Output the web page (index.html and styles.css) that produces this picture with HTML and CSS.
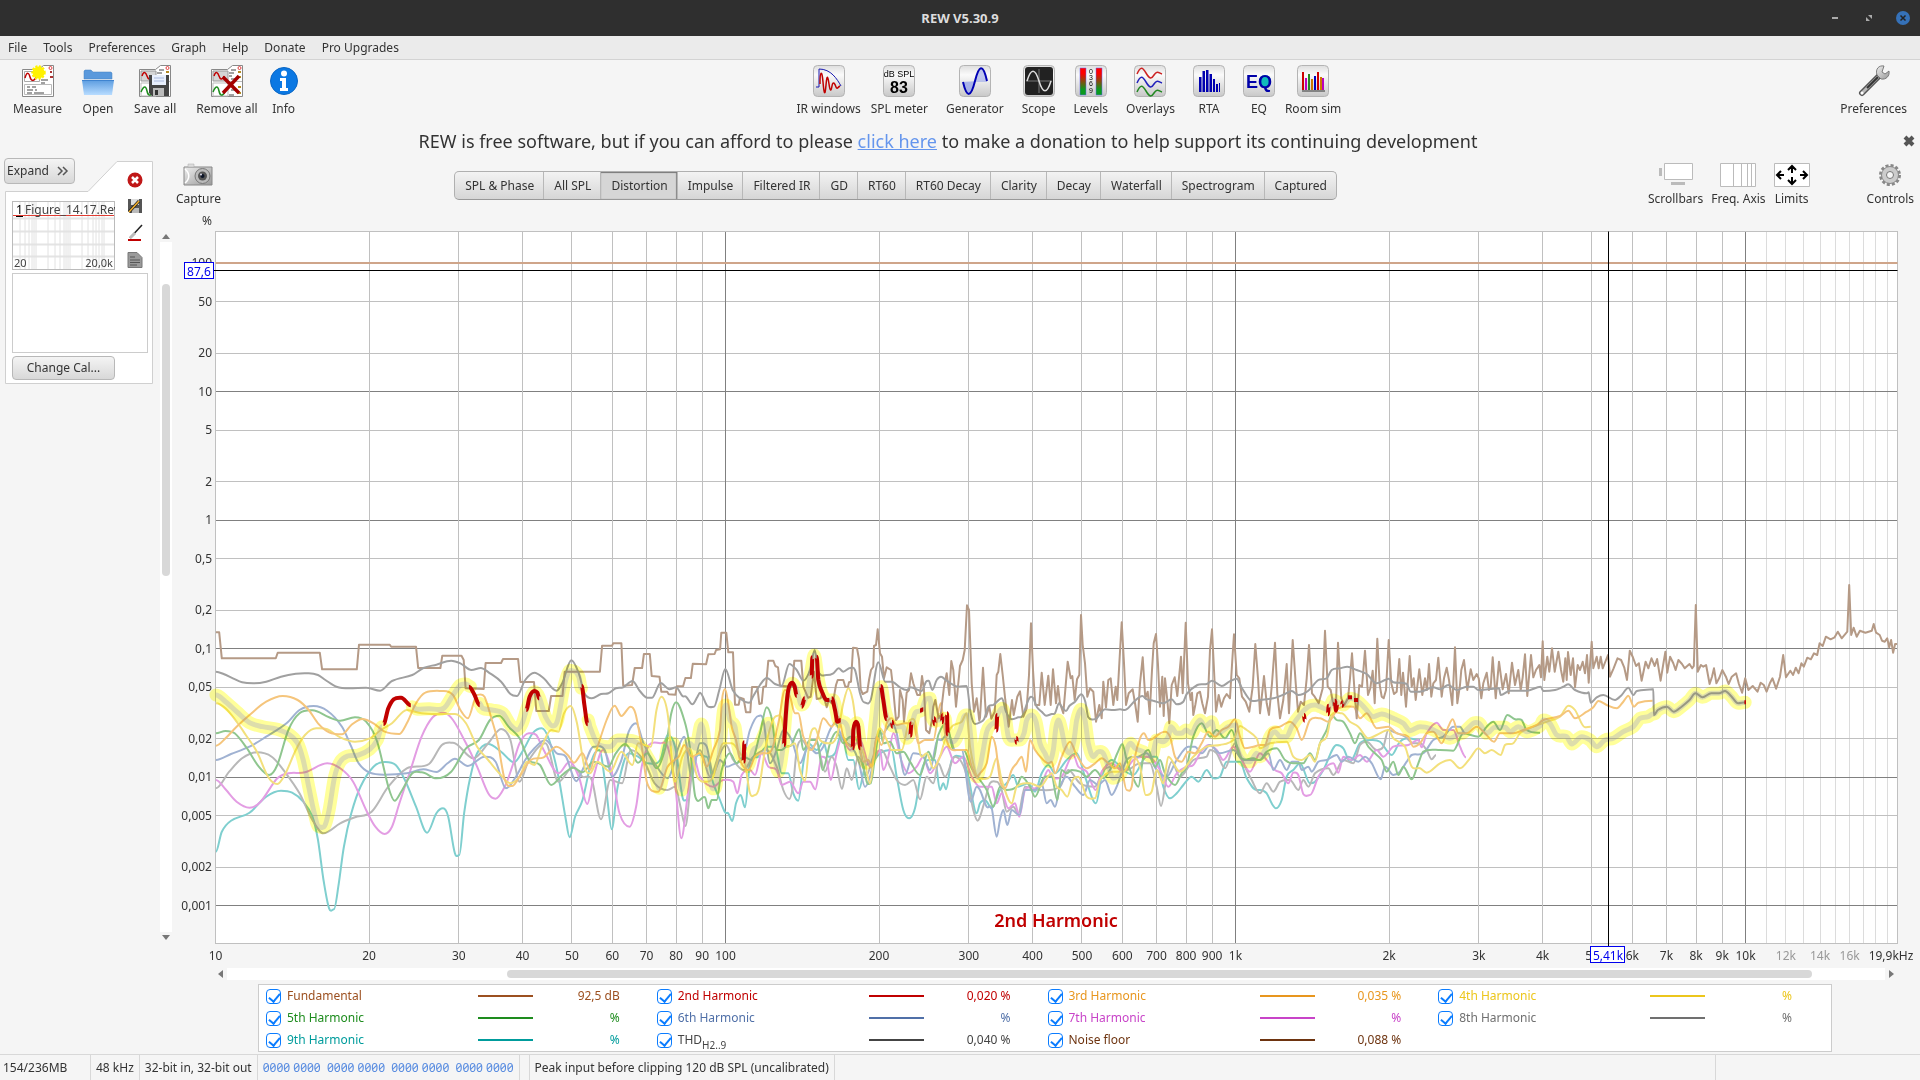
FILE: index.html
```html
<!DOCTYPE html>
<html lang="en">
<head>
  <meta charset="UTF-8">
  <title>REW V5.30.9</title>
  <link rel="stylesheet" href="styles.css">
</head>
<body>

<header class="titlebar">
  <h1>REW V5.30.9</h1>
  <div class="window-buttons">
    <button aria-label="Minimize"><svg width="14" height="14"><path d="M4 7h6" stroke="#aaa" stroke-width="2"/></svg></button>
    <button aria-label="Restore"><svg width="14" height="14"><path d="M6 4h4v4zM4 6v4h4z" fill="#aaa"/></svg></button>
    <button aria-label="Close"><svg width="14" height="14"><circle cx="7" cy="7" r="7" fill="#3571b8"/><path d="M4.500 4.500l5 5m0-5l-5 5" stroke="#222" stroke-width="1.500"/></svg></button>
  </div>
</header>

<nav class="menubar">
  <button>File</button>
  <button>Tools</button>
  <button>Preferences</button>
  <button>Graph</button>
  <button>Help</button>
  <button>Donate</button>
  <button>Pro Upgrades</button>
</nav>

<!-- shared icon parts -->
<svg class="defs" aria-hidden="true">
  <defs>
    <linearGradient id="tile" x1="0" y1="0" x2="0" y2="1"><stop offset="0" stop-color="#dedede"/><stop offset=".3" stop-color="#fafafa"/><stop offset="1" stop-color="#c8c8c8"/></linearGradient>
    <linearGradient id="folder" x1="0" y1="0" x2="0" y2="1"><stop offset="0" stop-color="#5b9ce0"/><stop offset="1" stop-color="#b8dcff"/></linearGradient>
    <linearGradient id="level" x1="0" y1="0" x2="0" y2="1"><stop offset=".2" stop-color="#f00"/><stop offset=".8" stop-color="#0a9a1e"/></linearGradient>
    <linearGradient id="metal" x1="0" y1="0" x2="1" y2="1"><stop offset="0" stop-color="#eee"/><stop offset="1" stop-color="#999"/></linearGradient>
    <symbol id="pages" viewBox="0 0 32 32">
      <path d="M.5 4.500h16l5-4h10v31H.5z" fill="#fff" stroke="#888"/>
      <path d="M2 6h15v10H2z" fill="#d5d5d5" stroke="#999"/>
      <path d="M3 11c2-6 4-3 5 0s3 5 5 0" fill="none" stroke="#c00000" stroke-width="1.500"/>
      <path d="M2 18h15v13H2z" fill="#fff" stroke="#bbb"/>
      <path d="M2 27c3-7 5-6 6-1s4 6 6 0" fill="none" stroke="#1e8c1e" stroke-width="1.500"/>
      <path d="M18 16.500h13" stroke="#bbb"/>
      <path d="M20 5h5M18 8h5M18 11h3M20 14h5M19 21h4M20 25h4M18 30h5" stroke="#444"/>
      <path d="M27 7h3M27 12h3M27 22h3M27 28h3" stroke="#b58b22" stroke-width="2"/>
      <circle cx="28.500" cy="3" r="1.500" fill="none" stroke="#e04040"/>
    </symbol>
  </defs>
</svg>

<div class="toolbar">
  <div class="tool-group files">
    <button class="tool">
      <svg width="32" height="32">
        <path d="M.5 4.500h16l5-4h10v31H.5z" fill="#fff" stroke="#888"/>
        <path d="M2.500 6.500h15v10h-15z" fill="#fff" stroke="#aaa"/>
        <path d="M3 13c2-7 4-5 5-1s4 5 6 0" fill="none" stroke="#c00000" stroke-width="1.500"/>
        <path d="M2.500 19.500h27v10h-27z" fill="#fff" stroke="#bbb"/>
        <path d="M5 22h3m2 0h4M5 25h6m2 0h2M5 28h5m2 0h10M19 15h7M19 18h4" stroke="#444"/>
        <path d="M28 7h2M28 12h3" stroke="#a33" stroke-width="2"/>
        <circle cx="28.500" cy="3" r="1.500" fill="none" stroke="#e04040"/>
        <circle cx="16.500" cy="7.500" r="6" fill="#fff200" stroke="#fff200" stroke-width="2.500" stroke-dasharray="2 1.500"/>
      </svg>
      <span>Measure</span>
    </button>
    <button class="tool">
      <svg width="32" height="32">
        <path d="M2 14V6l1-1h6l2 2h18l1 1v6z" fill="#5a99dc" stroke="#4580c0" stroke-width=".5"/>
        <path d="M0 15h32l-2 15H2z" fill="url(#folder)"/>
        <path d="M0 15.500h32" stroke="#3f84d0"/>
      </svg>
      <span>Open</span>
    </button>
    <button class="tool">
      <svg width="32" height="32">
        <use href="#pages" width="32" height="32"/>
        <path d="M10 10h20v21H13l-3-3z" fill="#444"/>
        <path d="M13 10h14v10H13z" fill="#e8effc"/>
        <path d="M15 13h10M15 16h10" stroke="#a9b8dc"/>
        <path d="M14 23h11v8H14z" fill="#bbb"/><path d="M16 25h3v5h-3z" fill="#333"/>
      </svg>
      <span>Save all</span>
    </button>
    <button class="tool tight-right">
      <svg width="32" height="32">
        <use href="#pages" width="32" height="32"/>
        <path d="M12 12l16 16M28 11L12 28" stroke="#a40000" stroke-width="3.500"/>
      </svg>
      <span>Remove all</span>
    </button>
    <button class="tool">
      <svg width="28" height="32">
        <circle cx="14" cy="16" r="13.500" fill="#0b78e3" stroke="#0a66c4"/>
        <circle cx="14" cy="8.500" r="3" fill="#fff"/>
        <path d="M10 13h6v10h2v3h-8v-3h2v-7h-2z" fill="#fff"/>
      </svg>
      <span>Info</span>
    </button>
  </div>

  <div class="tool-group">
    <button class="tool tight-right">
      <svg width="32" height="32"><rect class="tile" x=".5" y=".5" width="31" height="31" rx="4"/>
        <path d="M3 22h3V4c12 0 18 10 22 17" fill="none" stroke="#1818b0"/>
        <path d="M7 19c0-14 2-14 3-2s2 15 3 3 2-8 3-1 2 8 3 2 3-2 4 1 2 0 4-1" fill="none" stroke="#c00000" stroke-width="1.500"/></svg>
      <span>IR windows</span>
    </button>
    <button class="tool">
      <svg width="32" height="32"><rect class="tile" x=".5" y=".5" width="31" height="31" rx="4"/>
        <text x="16" y="12" class="ic-small">dB SPL</text><text x="16" y="28" class="ic-number">83</text></svg>
      <span>SPL meter</span>
    </button>
    <button class="tool">
      <svg width="32" height="32"><rect class="tile" x=".5" y=".5" width="31" height="31" rx="4"/>
        <path d="M3 17h25v-1C25-1 20-1 16 16z" fill="#9aa6e8" opacity=".6"/>
        <path d="M4 17h12c-4 16-8 16-12 0z" fill="#9aa6e8" opacity=".8"/>
        <path d="M4 17c4 17 8 15 12-1s8-18 12 0" fill="none" stroke="#0000b4" stroke-width="2"/></svg>
      <span>Generator</span>
    </button>
    <button class="tool">
      <svg width="32" height="32"><rect class="tile" x=".5" y=".5" width="31" height="31" rx="4"/>
        <rect x="2" y="2" width="28" height="28" rx="3" fill="#222"/>
        <path d="M16 4v24M3 16h26" stroke="#777"/>
        <path d="M4 16c4-13 8-13 12 0s8 13 12 0" fill="none" stroke="#ddd" stroke-width="1.500"/></svg>
      <span>Scope</span>
    </button>
    <button class="tool">
      <svg width="32" height="32"><rect class="tile" x=".5" y=".5" width="31" height="31" rx="4"/>
        <path d="M5 3h6v27H5zM21 3h6v27h-6z" fill="url(#level)" stroke="#66f" stroke-width=".5"/>
        <g class="ic-scale"><text x="16" y="9">0</text><text x="16" y="15">3</text><text x="16" y="21">6</text><text x="16" y="28">9</text></g></svg>
      <span>Levels</span>
    </button>
    <button class="tool">
      <svg width="32" height="32"><rect class="tile" x=".5" y=".5" width="31" height="31" rx="4"/>
        <g fill="none" stroke-width="1.500"><path d="M3 9c4-9 6-6 9-1s5 7 8 2 5-2 8-1" stroke="#c22"/>
        <path d="M3 18c4-9 6-6 9-1s5 7 8 2 5-2 8-1" stroke="#22b"/><path d="M3 27c4-9 6-6 9-1s5 7 8 2 5-2 8-1" stroke="#282"/></g></svg>
      <span>Overlays</span>
    </button>
    <button class="tool">
      <svg width="32" height="32"><rect class="tile" x=".5" y=".5" width="31" height="31" rx="4"/>
        <path d="M6 12h2.500v15H6zM9.500 6H12v21H9.500zM13 5h2.500v22H13zM16.500 9H19v18h-2.500zM20 14h2v13h-2zM23 19h2v8h-2zM26 18h1v9h-1z" fill="#0000b0"/></svg>
      <span>RTA</span>
    </button>
    <button class="tool tight-right">
      <svg width="32" height="32"><rect class="tile" x=".5" y=".5" width="31" height="31" rx="4"/>
        <circle cx="22" cy="16" r="6" fill="#1bb"/>
        <text x="16" y="23" class="ic-eq">EQ</text></svg>
      <span>EQ</span>
    </button>
    <button class="tool">
      <svg width="32" height="32"><rect class="tile" x=".5" y=".5" width="31" height="31" rx="4"/>
        <g stroke-width="2"><path d="M6 7v18M21 7v18" stroke="#c00"/><path d="M9 13v12M26 13v12" stroke="#b0b"/><path d="M12 9v16" stroke="#282"/><path d="M18 11v14" stroke="#00b"/><path d="M15 14v11M24 12v13" stroke="#c70"/></g>
        <path d="M5 26h23" stroke="#333"/></svg>
      <span>Room sim</span>
    </button>
  </div>

  <div class="tool-group">
    <button class="tool">
      <svg width="32" height="32">
        <path d="M4 28L22 10" stroke="#555" stroke-width="6" stroke-linecap="round"/>
        <path d="M4 28L21 11" stroke="#bbb" stroke-width="3" stroke-linecap="round"/>
        <path d="M9 23L20 12" stroke="#333" stroke-width="2"/>
        <path d="M26 1c-5-1-9 3-7 9l4 4c5 1 9-3 8-8l-4 3-3-2z" fill="url(#metal)" stroke="#666" stroke-width=".8"/>
        <circle cx="4" cy="28" r="1.500" fill="#fff"/>
      </svg>
      <span>Preferences</span>
    </button>
  </div>
</div>

<div class="donate">
  <p>REW is free software, but if you can afford to please <a href="#">click here</a> to make a donation to help support its continuing development</p>
  <button aria-label="Dismiss"><svg width="12" height="12"><path d="M2 2l8 8M10 2l-8 8" stroke="#555" stroke-width="4"/></svg></button>
</div>

<main>
  <aside>
    <button class="btn expand">Expand
      <svg width="12" height="10"><path d="M1 1l4 4-4 4M6 1l4 4-4 4" fill="none" stroke="#555" stroke-width="1.500"/></svg>
    </button>
    <div class="measurement">
      <svg class="card-shape" width="149" height="224"><path d="M.5 30.500H83L112 .5h35.500v222H.5z" fill="#fff" stroke="#d0d0d0"/></svg>
      <div class="preview-col">
        <svg class="preview" width="103" height="69">
          <rect x=".5" y=".5" width="102" height="68" fill="#fff" stroke="#bbb"/>
          <path d="M1 17.500h101M1 30.500h101M1 43.500h101M1 55.500h101" stroke="#e4e4e4" stroke-width="2"/>
          <path d="M8 1v67M13 1v67M17 1v67M20 1v67M22 1v67M24 1v67M36 1v67M43 1v67M48 1v67M52 1v67M54 1v67M56 1v67M58 1v67M70 1v67M76 1v67M81 1v67M84 1v67M87 1v67M90 1v67M92 1v67" stroke="#e2e2e2"/>
          <path d="M1 14.500h101" stroke="#e03c32"/>
          <path d="M4 15.500h7" stroke="#000"/>
          <text x="4" y="13" class="num">1</text>
          <text x="13" y="13">Figure_14.17.Rev</text>
          <text x="2" y="66" class="lim">20</text><text x="101" y="66" class="lim end">20,0k</text>
        </svg>
        <textarea aria-label="Measurement notes"></textarea>
        <button class="btn">Change Cal...</button>
      </div>
      <div class="side-icons">
        <button aria-label="Remove"><svg width="16" height="16"><circle cx="8" cy="8" r="7.500" fill="#c01818"/><path d="M5 5l6 6M11 5l-6 6" stroke="#fff" stroke-width="2.500"/></svg></button>
        <button aria-label="Save"><svg width="16" height="16"><path d="M1 1h14v14H3l-2-2z" fill="#555"/><path d="M4 1h8v6H4z" fill="#ddd"/><path d="M5 10h7v5H5z" fill="#bbb"/><path d="M2 14L12 3" stroke="#222" stroke-width="3"/><path d="M2 14L12 3" stroke="#f5b02a" stroke-width="1.500"/></svg></button>
        <button aria-label="Trace colour"><svg width="16" height="18"><path d="M3 14L15 1" stroke="#222" stroke-width="1.500"/><path d="M3 14l5-5" stroke="#bbb" stroke-width="3"/><path d="M1 16h13" stroke="#c00000" stroke-width="2"/></svg></button>
        <button aria-label="Notes"><svg width="16" height="16"><path d="M1 .5h9l5 5v10H1z" fill="#9a9a9a" stroke="#777"/><path d="M3 5h5M3 8h10M3 10.500h10M3 13h7" stroke="#555"/></svg></button>
      </div>
    </div>
  </aside>

  <div class="vscroll">
    <svg width="8" height="6"><path d="M0 6l4-5 4 5z" fill="#777"/></svg>
    <div class="track"><div class="thumb"></div></div>
    <svg width="8" height="6"><path d="M0 0l4 5 4-5z" fill="#777"/></svg>
  </div>

  <div class="graph">
    <div class="graph-tools">
      <button class="tool">
        <svg width="30" height="24">
          <path d="M1 4h28v18H1z" fill="url(#metal)" stroke="#888"/><path d="M5 1h6v3H5z" fill="#ddd" stroke="#aaa" stroke-width=".5"/>
          <path d="M2 6c5 4 5 10 0 14" fill="none" stroke="#fff" stroke-width="1.500"/>
          <circle cx="19.500" cy="13" r="7.500" fill="#bbb" stroke="#777"/><circle cx="19.500" cy="13" r="4.500" fill="#555"/><circle cx="19.500" cy="13" r="2" fill="#0c1426"/><circle cx="18" cy="11.500" r="1" fill="#dde"/>
        </svg>
        <span>Capture</span>
      </button>
      <div class="tabs">
        <button>SPL &amp; Phase</button>
        <button>All SPL</button>
        <button class="active">Distortion</button>
        <button>Impulse</button>
        <button>Filtered IR</button>
        <button>GD</button>
        <button>RT60</button>
        <button>RT60 Decay</button>
        <button>Clarity</button>
        <button>Decay</button>
        <button>Waterfall</button>
        <button>Spectrogram</button>
        <button>Captured</button>
      </div>
      <div class="view-tools">
        <button class="tool">
          <svg width="46" height="24"><path d="M11.500.5h28v16h-28z" fill="#fff" stroke="#bbb"/><path d="M6 5h3v8H6zM18 19h14v3H18z" fill="#bbb"/></svg>
          <span>Scrollbars</span>
        </button>
        <button class="tool">
          <svg width="36" height="24"><path d="M.5.5h35v23H.5zM13.500 0v24M21.500 0v24M27.500 0v24M31.500 0v24" fill="#fff" stroke="#bbb"/></svg>
          <span>Freq. Axis</span>
        </button>
        <button class="tool">
          <svg width="36" height="24"><path d="M.5.5h35v23H.5z" fill="#fff" stroke="#bbb"/><path d="M18 10V3m-4 4l4-4 4 4M18 14v7m-4-4l4 4 4-4M10 12H3m4-4l-4 4 4 4M26 12h7m-4-4l4 4-4 4" fill="none" stroke="#000" stroke-width="2"/></svg>
          <span>Limits</span>
        </button>
        <button class="tool controls">
          <svg width="24" height="24"><circle cx="12" cy="12" r="9.500" fill="none" stroke="#888" stroke-width="3" stroke-dasharray="3 2"/><circle cx="12" cy="12" r="8.500" fill="#ccc" stroke="#888"/><circle cx="12" cy="12" r="3.500" fill="#f5f5f5" stroke="#777"/></svg>
          <span>Controls</span>
        </button>
      </div>
    </div>

    <svg id="plot" viewBox="172 212 1748 754" role="img" aria-label="Distortion"></svg>

    <div class="hscroll">
      <svg width="6" height="8"><path d="M6 0L1 4l5 4z" fill="#777"/></svg>
      <div class="track"><div class="thumb"></div></div>
      <svg width="6" height="8"><path d="M0 0l5 4-5 4z" fill="#777"/></svg>
    </div>

    <div class="legend">
      <div class="entry fund"><label><input type="checkbox" checked>Fundamental</label><i></i><span>92,5 dB</span></div>
      <div class="entry h2"><label><input type="checkbox" checked>2nd Harmonic</label><i></i><span>0,020 %</span></div>
      <div class="entry h3"><label><input type="checkbox" checked>3rd Harmonic</label><i></i><span>0,035 %</span></div>
      <div class="entry h4"><label><input type="checkbox" checked>4th Harmonic</label><i></i><span>%</span></div>
      <div class="entry h5"><label><input type="checkbox" checked>5th Harmonic</label><i></i><span>%</span></div>
      <div class="entry h6"><label><input type="checkbox" checked>6th Harmonic</label><i></i><span>%</span></div>
      <div class="entry h7"><label><input type="checkbox" checked>7th Harmonic</label><i></i><span>%</span></div>
      <div class="entry h8"><label><input type="checkbox" checked>8th Harmonic</label><i></i><span>%</span></div>
      <div class="entry h9"><label><input type="checkbox" checked>9th Harmonic</label><i></i><span>%</span></div>
      <div class="entry thd"><label><input type="checkbox" checked><span>THD<sub>H2..9</sub></span></label><i></i><span>0,040 %</span></div>
      <div class="entry noise"><label><input type="checkbox" checked>Noise floor</label><i></i><span>0,088 %</span></div>
    </div>
  </div>
</main>

<footer class="statusbar">
  <span class="mem">154/236MB</span>
  <span>48 kHz</span>
  <span>32-bit in, 32-bit out</span>
  <span class="bits">0000 0000&nbsp; 0000 0000&nbsp; 0000 0000&nbsp; 0000 0000</span>
  <span class="blank"></span>
  <span>Peak input before clipping 120 dB SPL (uncalibrated)</span>
  <span class="rest"></span>
  <span class="last"></span>
</footer>

<script src="script.js"></script>
</body>
</html>
```

FILE: styles.css
```css
* {
  box-sizing: border-box;
}
body {
  margin: 0;
  min-height: 100vh;
  display: flex;
  flex-direction: column;
  background: #f5f5f5;
  color: #333;
  font: 12px/16px "Noto Sans", sans-serif;
}
button {
  font: inherit;
  color: inherit;
  background: none;
  border: 0;
  padding: 0;
}
svg {
  display: block;
}
.defs {
  position: absolute;
  width: 0;
  height: 0;
}

/* title bar and menu */
.titlebar {
  position: relative;
  height: 36px;
  background: #2f2f2f;
  color: #ddd;
}
.titlebar h1 {
  margin: 0;
  font-size: 13px;
  line-height: 36px;
  text-align: center;
}
.window-buttons {
  position: absolute;
  right: 10px;
  top: 11px;
  display: flex;
  gap: 20px;
}
.menubar {
  display: flex;
  gap: 16px;
  height: 24px;
  padding: 0 8px;
  background: #ebebeb;
  border-bottom: 1px solid #d3d3d3;
}

/* main toolbar */
.toolbar {
  display: flex;
  justify-content: space-between;
  padding: 5px 13px 6px;
}
.tool-group {
  display: flex;
  gap: 18px;
}
.files {
  gap: 20px;
}
.tool {
  display: flex;
  flex-direction: column;
  align-items: center;
  gap: 4px;
  white-space: nowrap;
}
.tight-right {
  margin-right: -8px;
}
.tile {
  fill: url(#tile);
  stroke: #b4b4b4;
}
.ic-small {
  font: 9px "Liberation Sans", sans-serif;
  text-anchor: middle;
}
.ic-number {
  font: bold 16px "Liberation Sans", sans-serif;
  text-anchor: middle;
}
.ic-eq {
  font: bold 18px "Liberation Sans", sans-serif;
  text-anchor: middle;
  fill: #0000a8;
}
.ic-scale {
  font: 7px "Liberation Sans", sans-serif;
  text-anchor: middle;
}

.donate {
  display: flex;
  align-items: center;
  height: 35px;
  padding-right: 5px;
}
.donate p {
  flex: 1;
  margin: 0;
  padding-right: 7px;
  text-align: center;
  font-size: 18px;
  line-height: 24px;
}
.donate a {
  color: #6495ed;
}

main {
  flex: 1;
  display: flex;
}

/* measurement list */
aside {
  width: 160px;
  padding-left: 4px;
}
.btn {
  height: 24px;
  border: 1px solid #b8b8b8;
  border-radius: 4px;
  background: linear-gradient(#f4f4f4, #d8d8d8);
}
.expand {
  display: flex;
  align-items: center;
  justify-content: space-between;
  width: 71px;
  height: 26px;
  padding: 0 5px 0 2px;
}
.measurement {
  position: relative;
  display: flex;
  justify-content: space-between;
  width: 149px;
  height: 224px;
  margin: -23px 0 0 1px;
  padding: 0 5px 0 7px;
}
.card-shape {
  position: absolute;
  left: 0;
  top: 0;
  z-index: -1;
}
.preview-col {
  width: 103px;
  padding-top: 40px;
}
.preview {
  overflow: hidden;
}
.preview text {
  fill: #444;
}
.preview .num {
  fill: #000;
}
.preview .lim {
  font-size: 11px;
}
.preview .end {
  text-anchor: end;
}
.preview-col textarea {
  display: block;
  width: 136px;
  height: 80px;
  margin: 3px 0;
  border: 1px solid #ccc;
  background: #fff;
  resize: none;
}
.preview-col .btn {
  width: 103px;
}
.side-icons {
  display: flex;
  flex-direction: column;
  gap: 10px;
  height: 112px;
  padding-top: 11px;
  margin-right: 6px;
}

/* scrollbars */
.vscroll {
  display: flex;
  flex-direction: column;
  align-items: center;
  gap: 3px;
  width: 12px;
  padding: 75px 0 113px;
}
.track {
  background: #fff;
}
.thumb {
  border-radius: 4px;
  background: #d8d8d8;
}
.vscroll .track {
  flex: 1;
  width: 12px;
  padding: 42px 2px 0;
}
.vscroll .thumb {
  height: 45%;
}
.hscroll {
  display: flex;
  align-items: center;
  gap: 4px;
  margin: 2px 25px 0 45px;
}
.hscroll .track {
  flex: 1;
  height: 12px;
  padding: 2px 73px 2px 280px;
}
.hscroll .thumb {
  height: 8px;
}

/* graph */
.graph {
  flex: 1;
  min-width: 0;
}
.graph-tools {
  display: grid;
  grid-template-columns: auto 3fr auto 4fr auto;
  align-items: start;
  height: 54px;
  padding: 5px 6px 0 4px;
}
.tabs {
  grid-column: 3;
  display: flex;
  height: 29px;
  margin-top: 8px;
  border: 1px solid #b0b0b0;
  border-bottom-color: #999;
  border-radius: 5px;
  overflow: hidden;
  background: linear-gradient(#f3f3f3, #d6d6d6);
}
.tabs button {
  padding: 0 9px 0 10px;
  white-space: nowrap;
}
.tabs button + button {
  border-left: 1px solid #b8b8b8;
}
.tabs .active {
  background: #d6d6d6;
  box-shadow: inset 0 1px 1px #777, inset -1px 0 1px #888;
}
.view-tools {
  grid-column: 5;
  display: flex;
  gap: 8px;
}
.view-tools .controls {
  margin-left: 49px;
}
#plot {
  width: 100%;
}
#plot text {
  fill: #333;
}
#plot .y text,
#plot .unit {
  text-anchor: end;
}
#plot .x text {
  text-anchor: middle;
}
#plot .x .faint {
  fill: #999;
}
#plot .cursor text {
  fill: #0000ee;
  text-anchor: middle;
}
#plot .cursor rect {
  fill: #fff;
  stroke: #0000ee;
}
#plot .caption {
  font-size: 18px;
  font-weight: 600;
  fill: #c00000;
  text-anchor: middle;
  stroke: #fff;
  stroke-width: 2px;
  paint-order: stroke;
}
.trace {
  fill: none;
  stroke-width: 2;
  stroke-linejoin: round;
}
.halo {
  fill: none;
  stroke: #ffff9a;
  stroke-width: 13;
  stroke-linecap: round;
  stroke-linejoin: round;
  mix-blend-mode: multiply;
}
.core {
  fill: none;
  stroke: #8585d8;
  stroke-opacity: .28;
  stroke-width: 5;
  stroke-linejoin: round;
}
.peak {
  fill: none;
  stroke: #c00000;
  stroke-width: 4;
}

/* legend */
.legend {
  display: grid;
  grid-template-columns: repeat(4, 1fr);
  column-gap: 37px;
  margin: 4px 88px 2px 86px;
  padding: 0 39px 0 7px;
  border: 1px solid #ccc;
  background: #fff;
}
.entry {
  display: grid;
  grid-template-columns: 212px 55px 1fr;
  align-items: center;
  height: 22px;
}
.entry label {
  display: flex;
  align-items: center;
  gap: 6px;
}
.entry input {
  appearance: none;
  width: 15px;
  height: 15px;
  margin: 0;
  border: 1px solid #0a7cff;
  border-radius: 4px;
  background: #fff;
  position: relative;
}
.entry input:checked::after {
  content: "";
  position: absolute;
  left: 4px;
  top: 1px;
  width: 5px;
  height: 9px;
  border: solid #0a7cff;
  border-width: 0 2px 2px 0;
  transform: rotate(40deg);
}
.entry i {
  height: 2px;
  background: currentColor;
}
.entry > span {
  text-align: right;
}
.entry sub {
  font-size: 10px;
  line-height: 0;
  vertical-align: -5px;
}
.fund { color: #9c5020; }
.h2 { color: #c00000; }
.h3 { color: #e8961e; }
.h4 { color: #ecc61c; }
.h5 { color: #1e8c1e; }
.h6 { color: #5070a8; }
.h7 { color: #c844c8; }
.h8 { color: #707070; }
.h9 { color: #009c9c; }
.thd { color: #444; }
.noise { color: #6e3410; }

/* status bar */
.statusbar {
  display: flex;
  height: 26px;
  border-top: 1px solid #d8d8d8;
  line-height: 25px;
}
.statusbar span {
  padding: 0 5px;
  border-right: 1px solid #d8d8d8;
  white-space: nowrap;
}
.statusbar .mem {
  width: 91px;
  padding-left: 3px;
}
.statusbar .bits {
  color: #5a8de0;
  font-feature-settings: "zero";
}
.statusbar .blank {
  width: 10px;
  padding: 0;
}
.statusbar .rest {
  flex: 1;
}
.statusbar .last {
  width: 204px;
  border: 0;
}
```

FILE: script.js
```js
const NS = 'http://www.w3.org/2000/svg';
const plot = document.getElementById('plot');
const LEFT = 215.5, RIGHT = 1897.5, TOP = 231.5, BOTTOM = 943.5;

const fx = f => LEFT + 510 * Math.log10(f / 10);
const vy = v => 520.3 - 128.5 * Math.log10(v);
const snap = n => Math.floor(n) + 0.5;

function add(tag, attrs, parent, text) {
  const el = document.createElementNS(NS, tag);
  for (const k in attrs) el.setAttribute(k, attrs[k]);
  if (text) el.textContent = text;
  (parent || plot).appendChild(el);
  return el;
}

function line(x1, y1, x2, y2, stroke) {
  add('path', { d: `M${x1} ${y1}L${x2} ${y2}`, stroke });
}

// Grid
add('rect', { x: LEFT, y: TOP, width: RIGHT - LEFT, height: BOTTOM - TOP, fill: '#fff' });
for (let k = 11; k < 20; k++) line(snap(fx(k * 1000)), TOP, snap(fx(k * 1000)), BOTTOM, '#dcdcdc');
const yTicks = [50, 20, 5, 2, 0.5, 0.2, 0.05, 0.02, 0.005, 0.002, 100, 10, 1, 0.1, 0.01, 0.001];
for (const v of yTicks) {
  const y = snap(vy(v));
  line(LEFT, y, RIGHT, y, Number.isInteger(Math.round(Math.log10(v) * 1000) / 1000) ? '#808080' : '#c0c0c0');
}
for (const dec of [10, 100, 1000]) {
  for (let m = 2; m <= 10; m++) line(snap(fx(dec * m)), TOP, snap(fx(dec * m)), BOTTOM, m === 10 ? '#808080' : '#c0c0c0');
}
add('rect', { x: LEFT, y: TOP, width: RIGHT - LEFT, height: BOTTOM - TOP, fill: 'none', stroke: '#c0c0c0' });
add('path', { d: `M${LEFT} 263H${RIGHT}`, stroke: '#cfa58a', 'stroke-width': 2 });

// Axis labels
add('text', { x: 212, y: 225, class: 'unit' }, plot, '%');
const yAxis = add('g', { class: 'y' });
for (const v of yTicks) add('text', { x: 212, y: Math.round(vy(v)) + 4 }, yAxis, String(v).replace('.', ','));
const xAxis = add('g', { class: 'x' });
const hz = f => (f >= 1000 ? f / 1000 + 'k' : String(f));
for (const dec of [10, 100, 1000]) {
  for (let m = 1; m <= 9; m++) add('text', { x: fx(dec * m), y: 960 }, xAxis, hz(dec * m));
}
add('text', { x: fx(10000), y: 960 }, xAxis, '10k');
for (const k of [12, 14, 16]) add('text', { x: fx(k * 1000), y: 960, class: 'faint' }, xAxis, k + 'k');
add('text', { x: 1891, y: 960 }, xAxis, '19,9kHz');

// Samples are stored per band: x origin, y origin, x steps per pixel. y is always 3 steps per pixel.
const bands = {
  a: [170, 580, 2.703],
  b: [700, 590, 3],
  c: [980, 590, 3],
  d: [1260, 590, 3],
  e: [1300, 560, 2.529]
};

const traces = [
  { name: 'h9', color: '#7fcfcf', data: {
    a: '124,815 140,755 165,722 215,698 260,650 300,632 330,638 360,665 385,710 400,780 415,900 430,985 443,988 455,920 470,800 490,700 515,620 550,560 580,546 610,555 635,600 665,680 695,758 720,700 738,685 752,710 770,820 782,825 795,700 810,600 830,520 860,492 895,515 930,547 955,510 980,460 1005,445 1025,480 1050,590 1070,720 1080,772 1095,710 1115,660 1140,540 1160,510 1180,640 1194,748 1210,620 1240,520 1265,530 1290,550 1325,540 1345,465 1365,500 1385,650 1395,660 1415,540',
    b: '20,500 40,580 60,630 75,667 85,670 97,693 108,640 122,615 135,652 150,520 175,500 200,470 225,470 245,550 265,550 280,610 295,632 310,520 325,460 350,480 370,455 385,500 405,490 425,430 445,510 460,510 477,598 495,530 515,520 540,490 575,480 590,560 610,660 627,685 645,655 665,540 685,510 705,510 720,600 730,580 738,598 755,510 785,500 805,560 830,670',
    c: '0,640 15,630 35,655 60,600 80,580 100,555 115,590 145,580 165,605 185,550 205,525 225,550 260,510 290,490 315,560 348,640 365,560 395,510 430,540 460,555 500,500 530,500 550,590 570,625 590,610 610,585 635,560 655,575 680,540 700,565 720,560 740,515 780,515 800,565 830,600',
    d: '0,600 20,610 35,640 48,655 65,630 80,560 100,540 120,520 150,580 165,575 190,540 230,465 250,475 270,515 300,460 330,450 360,455 395,495 420,455 445,445 480,450' } },
  { name: 'h8', color: '#b8b8b8', data: {
    a: '124,625 160,575 195,535 235,517 275,530 310,575 350,640 385,720 415,760 460,730 500,712 545,695 590,620 640,565 700,552 735,495 765,488 820,535 860,490 895,447 920,480 945,605 970,540 1015,490 1050,605 1090,560 1115,590 1140,600 1165,718 1190,600 1222,610 1245,510 1280,540 1310,610 1345,630 1365,620 1380,680 1393,738 1410,590',
    b: '0,480 30,560 55,500 78,465 100,510 130,540 160,500 200,480 230,530 250,600 268,627 280,580 290,480 305,450 330,480 350,460 375,545 395,500 410,530 426,597 440,535 455,570 475,500 500,555 520,500 545,480 570,530 590,570 615,585 640,570 660,628 680,560 700,580 715,520 735,560 765,500 795,540 820,660 833,692',
    c: '0,680 15,630 30,580 50,575 65,600 80,665 100,650 115,670 135,590 180,600 240,590 265,540 300,580 345,590 370,540 400,530 440,540 480,520 510,520 530,590 543,648 560,560 575,515 600,560 640,510 680,500 690,480 710,490 735,535 765,460 790,520 815,570',
    d: '0,610 20,580 40,605 60,575 90,570 115,600 130,570 145,590 165,550 205,535 220,555 250,510 280,520 300,465 320,455 350,480 370,470 385,420 400,425 435,440 460,460 480,460 500,480 515,508 528,495' } },
  { name: 'h7', color: '#e39de3', data: {
    a: '124,600 150,628 180,665 215,683 245,665 290,595 320,580 365,577 425,550 460,565 495,605 530,690 555,740 580,762 600,740 620,670 650,570 680,470 710,412 740,398 765,420 800,490 830,560 860,640 880,656 905,620 925,560 945,490 970,460 990,465 1010,510 1050,580 1080,545 1105,590 1128,672 1145,590 1170,510 1195,580 1215,700 1242,740 1260,680 1275,560 1295,495 1325,490 1345,500 1365,610 1382,775 1400,640 1415,530',
    b: '0,560 40,590 70,570 100,575 112,610 125,555 150,540 165,555 185,490 205,530 230,540 245,585 270,575 295,610 310,575 330,575 346,598 365,500 380,510 392,570 410,490 425,445 450,480 480,450 510,530 540,480 550,540 565,500 580,430 605,515 625,550 650,530 670,500 690,550 720,500 740,470 765,520 790,500 815,560',
    c: '0,590 35,590 50,640 65,610 85,655 105,640 118,680 135,600 165,595 185,580 205,540 220,565 245,560 280,495 295,530 320,545 347,600 365,545 395,520 430,545 460,510 490,500 515,505 540,540 565,590 590,550 620,530 640,525 660,490 685,465 710,480 730,510 760,470 780,500 810,545',
    d: '0,490 20,510 45,540 65,550 85,580 100,548 115,555 130,612 150,615 175,560 190,540 205,525 220,520 235,548 250,500 275,510 300,495 320,515 350,480 370,500 400,470 445,465 475,450 485,472 500,430 530,398 550,420 580,420 600,470 618,502' } },
  { name: 'h6', color: '#a0b2d2', data: {
    a: '124,540 165,522 215,500 260,470 315,430 350,390 388,378 425,392 465,440 490,500 510,550 540,578 580,584 640,580 685,568 720,576 750,550 770,536 805,558 850,530 880,545 908,625 935,590 960,540 985,505 1015,480 1045,520 1070,530 1098,604 1115,570 1145,500 1175,510 1195,590 1220,540 1240,455 1260,430 1280,490 1310,550 1345,595 1375,500 1390,470 1410,590',
    b: '0,460 20,470 40,550 60,510 80,530 95,525 130,500 150,420 175,378 190,390 210,520 230,480 250,420 275,450 300,520 325,470 350,490 370,470 390,420 405,400 430,450 455,470 475,510 495,590 515,540 530,440 550,430 575,400 590,430 615,555 640,490 670,500 690,540 710,455 725,450 745,430 765,480 785,480 812,635 830,590',
    c: '0,600 20,650 35,655 50,740 60,690 70,660 82,705 95,660 118,675 135,600 165,600 185,580 200,640 212,630 225,650 240,590 260,560 285,590 310,615 330,570 355,585 375,570 395,615 410,590 440,510 475,500 500,490 530,540 560,560 590,510 625,470 645,470 665,490 690,465 720,490 760,480 790,510 830,510',
    d: '0,510 25,490 40,540 60,510 80,540 95,515 115,515 125,540 145,530 155,545 175,515 200,510 230,495 245,515 265,500 295,515 315,500 335,520 362,568 375,530 400,555 420,545 440,515 455,495 490,490 520,450 550,440 580,410 600,410 615,430' } },
  { name: 'h5', color: '#8fc68f', data: {
    a: '124,460 150,453 175,460 205,500 240,560 268,585 290,555 320,450 350,400 385,391 430,412 460,422 500,412 530,425 560,485 590,620 607,662 625,635 655,580 680,577 720,595 760,575 800,505 835,480 865,420 890,407 915,440 945,475 970,540 1000,555 1030,615 1060,585 1090,563 1115,577 1145,545 1185,560 1205,520 1230,492 1245,510 1265,548 1290,520 1315,565 1340,500 1355,400 1368,367 1390,420 1405,500 1420,650',
    b: '15,622 25,655 35,630 50,630 65,540 90,490 110,520 130,500 155,510 180,430 200,352 215,385 230,480 245,480 258,470 275,465 285,440 298,418 310,480 330,450 350,450 368,540 390,460 410,425 430,460 450,440 475,460 500,575 512,580 525,500 540,420 550,460 570,455 590,490 610,485 630,515 660,555 685,485 700,510 715,435 740,400 760,480 790,480 815,535',
    c: '0,570 20,600 40,650 60,590 80,600 110,590 125,560 150,590 165,620 190,565 215,560 232,630 245,540 260,550 275,540 300,545 320,560 345,540 370,565 395,530 412,490 427,462 440,510 460,565 475,590 490,500 505,480 525,530 540,510 555,550 585,585 605,550 620,530 640,440 665,400 690,440 710,420 735,445 755,420 780,500 820,505',
    d: '0,510 20,485 50,475 75,510 100,520 130,520 150,490 165,510 180,460 200,420 215,375 230,390 250,395 270,430 285,460 300,430 325,470 345,490 365,510 380,545 400,515 415,555 430,530 455,568 475,520 490,485 540,480 580,482 610,430 655,440 680,410 700,395 720,420 742,375 765,388 785,390 800,420 840,428' } },
  { name: 'h4', color: '#f3e07c', data: {
    a: '124,370 150,385 180,425 205,465 235,515 265,590 290,612 310,585 340,510 365,465 395,445 425,448 460,472 500,485 540,475 570,450 600,430 640,390 680,400 720,402 770,402 800,430 830,500 860,540 890,580 920,610 945,590 965,545 985,555 1005,500 1030,450 1050,455 1065,400 1083,378 1100,430 1120,560 1135,580 1155,545 1190,575 1220,515 1250,555 1265,490 1300,500 1315,390 1328,350 1345,400 1365,605 1385,530 1405,505 1425,590',
    b: '20,575 40,560 70,460 95,460 120,490 135,520 150,610 165,615 178,590 195,480 215,400 230,378 245,385 262,470 285,460 300,540 315,572 330,440 345,415 360,450 385,460 410,440 430,340 445,295 458,330 475,450 490,490 510,580 525,470 540,415 560,450 575,480 605,480 630,390 645,395 665,500 680,490 700,535 720,500 735,450 755,410 785,395 800,370 810,470 830,560',
    c: '0,565 30,560 50,505 65,570 95,640 110,590 150,580 180,590 215,550 230,590 245,600 262,620 278,570 295,560 320,620 345,625 360,570 400,545 430,545 460,500 480,530 497,615 515,605 530,540 550,580 565,500 600,545 640,500 680,470 720,465 760,450 780,408 800,420 830,445',
    d: '0,475 30,460 80,455 100,500 125,510 150,495 165,515 180,460 200,440 215,375 245,370 270,395 295,410 325,445 350,435 385,420 400,445 435,470 455,530 480,535 500,548 540,520 570,510 600,535 630,505 655,475 675,490 695,480 722,495 735,465 760,460 780,430 820,410 860,395 900,380 925,347 945,360 975,412 992,410' } },
  { name: 'h3', color: '#f5c57c', data: {
    a: '124,497 150,475 180,440 215,405 260,365 305,348 345,360 375,390 400,430 430,457 465,463 490,435 520,417 550,430 580,455 620,462 640,430 665,370 690,338 740,333 765,345 785,390 805,415 830,345 850,350 870,420 885,480 905,600 925,618 950,580 975,540 1010,532 1045,500 1075,525 1092,548 1115,520 1135,570 1150,520 1180,420 1202,377 1220,408 1245,380 1258,400 1275,500 1290,610 1320,635 1345,560 1375,530 1390,495 1410,530',
    b: '0,490 20,530 40,480 60,420 66,330 75,297 85,340 95,410 108,450 120,510 145,540 165,500 185,490 215,480 235,400 255,300 270,320 285,370 295,370 310,440 335,480 350,450 370,385 395,410 415,380 430,440 455,470 470,440 490,515 505,510 515,530 530,440 545,465 560,400 575,385 590,405 615,400 640,400 655,460 675,450 700,450 722,340 735,430 750,475 770,480 800,480 815,530 830,560',
    c: '0,550 20,520 35,440 47,470 60,570 75,595 95,540 110,520 125,500 138,545 150,450 165,480 185,505 205,520 215,515 225,550 245,500 270,455 290,495 320,535 345,520 365,505 385,520 405,535 420,520 440,600 455,590 465,500 480,445 492,430 505,450 520,445 540,430 555,425 570,440 585,500 605,515 625,485 645,490 665,460 685,425 705,440 725,420 745,410 765,388 780,440 795,475 820,470',
    d: '0,465 15,465 30,420 60,410 90,395 110,415 125,450 150,390 180,385 205,395 235,355 280,350 300,385 320,370 350,415 385,410 410,430 445,440 460,470 480,460 500,430 520,425 545,460 565,410 578,388 595,430 620,430 650,410 675,430 702,455 720,430 760,430 790,420 830,405 850,390 900,378 925,362 945,385 980,365 1000,352 1015,333 1040,345 1070,355 1090,335 1105,317 1122,350 1135,338 1178,332' } },
  { name: 'noise', color: '#b59a86', straight: true, data: {
    a: '124,157 133,157 140,235 286,235 291,218 405,218 411,268 505,268 511,194 594,194 598,200 665,200 671,264 731,264 736,227 788,227 794,240 799,325 848,327 853,249 895,249 900,237 941,237 947,306 984,306 990,393 1024,393 1030,348 1061,348 1067,275 1162,275 1168,197 1195,197 1198,190 1220,190 1225,317 1249,315 1256,264 1276,264 1281,222 1297,222 1302,288 1323,290 1328,335 1344,335 1348,343 1366,344 1370,319 1387,319 1393,294 1408,294 1413,251 1449,253 1455,223 1472,222 1476,210 1487,208',
    b: '64,128 79,128 85,187 99,187 105,344 116,344 120,323 131,327 138,367 151,367 156,291 172,291 178,342 185,340 190,291 198,289 205,212 220,212 226,228 234,232 240,287 277,290 283,212 304,212 310,290 324,323 332,320 342,245 350,327 362,325 366,312 374,330 380,352 386,330 395,340 401,325 408,285 413,270 430,270 436,290 444,290 447,277 453,275 459,173 471,175 477,208 482,298 488,312 502,305 507,270 513,240 520,230 522,168 528,165 533,118 540,190 546,200 552,265 560,232 573,240 580,300 588,390 596,380 600,300 608,330 612,395 620,308 627,300 633,250 640,280 652,315 660,315 666,258 672,300 678,420 688,430 696,390 700,350 706,330 716,385 722,375 732,290 740,250 748,315 754,213 760,240 768,350 780,228 788,210 794,180 801,46 807,60 815,280 822,365 830,325 838,392',
    c: '0,383 9,233 18,380 28,350 34,386 44,365 50,255 55,245 61,192 68,255 76,330 86,410 96,330 101,375 112,320 120,304 130,380 140,355 147,255 153,100 159,240 166,345 178,345 185,248 194,345 205,257 212,345 219,238 228,340 234,288 240,340 250,370 263,215 272,265 277,258 284,330 291,268 298,255 303,75 308,165 315,220 322,320 330,295 340,305 348,395 358,345 365,385 370,275 378,352 385,270 392,265 400,345 407,290 412,330 419,200 425,97 432,220 438,345 446,310 458,298 466,345 473,395 480,280 488,202 496,325 503,305 509,372 516,240 521,160 528,132 534,225 540,350 547,260 551,378 555,265 562,330 568,400 575,285 584,262 592,318 603,200 608,310 617,98 624,280 632,330 636,308 640,375 646,345 652,310 660,305 667,340 675,370 684,320 690,180 696,118 702,240 708,365 716,315 724,350 732,325 740,312 750,325 757,210 762,133 770,255 778,265 786,320 797,335 808,365 818,290 826,162 834,265',
    d: '0,370 12,258 20,340 27,375 36,280 45,158 52,310 60,385 70,330 80,222 87,370 98,150 107,280 114,365 122,335 132,345 140,265 147,165 156,310 164,320 176,340 188,295 195,122 203,290 212,300 220,345 228,340 234,158 244,325 253,345 264,325 270,265 276,190 285,325 290,385 298,285 306,290 315,182 324,315 331,295 338,242 344,340 352,146 359,285 365,320 371,325 378,300 386,150 394,280 402,312 410,305 418,207 424,315 429,248 438,350 449,198 455,290 461,265 467,330 478,238 487,315 495,265 501,300 507,222 514,320 520,280 528,270 535,203 545,320 552,265 560,233 567,270 577,345 585,172 592,340 600,285 604,240 612,210 622,300 632,238 640,270 650,252 656,265 664,325 670,280 680,248 687,300 692,290 698,202 707,325 717,215 728,298 738,252 746,310 756,218 765,285 775,240 782,300 788,262 795,193 802,318 813,195 820,262 828,240 838,225 843,262 848,154 853,270 862,200 868,245 876,175 884,245 895,185 903,240 910,275 916,205 920,270 924,186 932,255 939,205 945,292 953,225 960,240 968,215 975,250 981,195 986,278 995,155 1000,235 1010,200 1016,235 1022,200 1028,235 1038,210 1044,195',
    e: '784,350 793,325 803,295 812,300 820,322 827,360 834,272 842,292 850,318 857,310 864,362 874,305 881,325 889,295 897,318 903,297 912,362 919,310 924,275 929,338 936,290 944,310 950,330 957,300 966,312 973,325 985,312 992,325 996,318 1001,135 1006,335 1014,315 1020,320 1027,315 1036,372 1042,350 1047,325 1053,370 1060,355 1068,330 1077,350 1084,372 1092,350 1103,340 1110,372 1118,398 1126,355 1134,390 1145,378 1157,395 1165,368 1173,375 1180,395 1188,370 1195,355 1204,386 1214,350 1222,285 1229,352 1240,332 1247,345 1254,323 1261,340 1268,310 1274,320 1283,293 1292,298 1300,280 1308,285 1314,250 1322,258 1330,230 1342,238 1352,232 1360,215 1370,235 1384,215 1389,75 1394,225 1400,203 1408,230 1416,212 1430,218 1446,212 1451,192 1457,218 1466,225 1472,242 1479,245 1485,235 1490,262 1495,240 1500,278 1505,252 1510,252' } },
  { name: 'thd', color: '#a0a0a0', data: {
    a: '124,275 145,282 170,295 195,307 225,310 260,305 300,290 340,281 375,280 400,285 420,300 450,320 485,325 530,323 568,332 600,303 655,285 685,264 720,254 760,242 785,250 815,270 840,264 865,280 895,305 920,342 938,348 960,300 985,278 1010,295 1045,332 1060,310 1085,241 1105,280 1120,340 1140,355 1165,342 1185,340 1205,325 1225,322 1250,303 1270,333 1290,353 1303,353 1326,309 1350,328 1368,322 1385,348 1395,350 1412,373 1425,352',
    b: '0,308 22,348 42,350 58,300 76,237 98,300 122,327 148,338 160,318 180,285 200,264 225,282 245,287 268,222 290,240 310,272 330,240 344,180 355,245 380,255 400,250 416,235 430,245 450,234 465,240 480,310 492,337 512,330 535,217 556,275 575,275 600,292 620,300 632,292 665,303 678,275 686,272 697,300 710,270 723,260 740,272 775,290 800,288 812,370 825,402',
    c: '0,397 12,388 25,350 40,345 66,325 78,365 95,388 115,382 127,378 145,330 153,320 160,325 170,350 185,365 198,377 215,372 225,370 237,340 245,350 258,363 268,348 285,335 304,313 316,335 325,382 347,387 360,372 375,358 400,360 420,358 435,360 465,332 487,318 500,328 520,332 550,340 575,328 590,343 610,335 620,312 652,285 680,282 696,272 725,288 748,275 770,266 785,293 810,330 830,332',
    d: '0,330 40,325 75,312 95,303 115,315 145,302 175,270 200,265 215,240 240,235 262,230 290,240 320,252 350,280 375,270 386,266 400,277 440,282 452,305 480,305 520,292 540,298 565,285 590,300 620,290 640,290 655,300 690,297 717,295 722,315 750,302 800,302 842,290 850,303 885,300 910,290 925,283 945,300 980,310 986,307 992,338 1010,322 1030,315 1065,330 1085,315 1105,293 1120,315 1130,303 1177,298 1180,297',
    e: '895,466 905,450 928,440 945,455 965,440 985,420 1000,400 1018,412 1040,400 1060,400 1075,393 1090,408 1108,430 1126,427' } }
];

// 2nd harmonic is the selected trace, each entry starts a new run
const second = [
  { a: '124,345 150,365 180,395 215,428 250,440 290,448 320,462 345,490 360,540 375,620 390,700 402,740 418,738 430,690 445,590 460,545 480,528 510,525 540,508 560,480 573,440' },
  { a: '655,380 668,388 700,386 740,385 765,345 785,315 800,312 812,320' },
  { a: '837,370 845,385 870,390 900,400 920,435 938,450 952,430 965,385 985,335 998,352 1015,410 1035,438 1048,420 1065,320 1078,275 1090,273 1105,290 1112,325' },
  { a: '1130,420 1135,440 1155,490 1190,500 1210,480 1250,482 1270,495 1290,530 1310,575 1322,625 1335,570 1345,500 1360,490 1375,590 1383,630 1395,540 1405,490 1420,505 1436,432',
    b: '12,430 22,520 35,590 45,595 60,470 70,365 78,345 90,390 105,410 112,460 125,500 133,490 142,530 160,480 178,465 195,425 205,400 220,480 235,545 248,480 258,370 266,300 276,280 290,300 305,345 322,310 335,230 343,195 352,250 362,300 380,330 400,330 415,390 430,395 442,410 455,480 462,420 470,398 478,440 484,490 500,520 515,490 525,400 535,310 543,290 555,360 570,400 590,410 610,410 620,445 632,420 645,370 665,360 676,330 690,325 697,385 715,390 735,385 742,440 760,455 780,420 792,380 803,375 812,440 820,530 830,560',
    c: '0,530 8,490 20,425 32,405 45,395 55,370 66,355 75,375 85,440 100,450 120,450 132,430 140,390 155,375 168,395 180,460 195,490 208,515 220,480 228,410 235,390 245,420 255,470 270,490 282,450 290,390 303,358 315,390 325,460 340,500 355,485 370,490 385,530 400,565 410,560 425,545 440,480 452,460 465,475 490,485 515,500 530,450 548,455 565,440 573,410 590,430 605,430 618,420 635,430 648,405 660,390 675,410 695,395 705,430 725,425 745,410 768,405 772,470 790,510 810,515 830,490',
    d: '0,500 15,480 30,440 45,425 60,440 80,440 95,410 120,375 145,350 165,345 180,350 205,360 220,330 250,345 270,325 295,335 315,355 340,380 365,372 400,385 430,400 450,422 480,410 510,415 540,430 570,445 590,435 610,428 640,400 655,398 680,430 705,412 735,412 750,425 775,410 800,425 840,408 850,390 870,400 890,435 920,440 935,462 965,440 990,450 1010,470 1035,450 1060,445 1090,425 1120,410 1140,385 1165,380 1178,372',
    e: '896,462 905,450 928,440 945,455 965,440 985,420 1000,400 1018,412 1040,400 1060,400 1075,393 1090,408 1108,430 1126,427' }
];

const peaks = [
  { a: '577,432 590,385 605,358 625,353 651,376' }, { a: '808,320 822,342 837,376' },
  { a: '963,390 972,350 985,333 993,338 998,355' }, { a: '1113,318 1120,375 1129,433' },
  { b: '131,515 133,457' }, { b: '252,465 254,430 260,340 266,295 276,278 284,290 290,318' },
  { b: '305,350 314,325' }, { b: '335,260 337,202' }, { b: '350,200 355,270 366,305 380,330 388,330' },
  { b: '395,325 405,360 412,395 422,390' }, { b: '458,475 460,420 468,395 475,410 481,475' },
  { b: '542,288 550,330 560,388' }, { b: '576,395 578,410' }, { b: '631,437 634,400' }, { b: '660,362 670,358' },
  { b: '702,385 704,403' }, { b: '726,397 728,375' }, { b: '741,370 743,433' },
  { c: '49,422 52,375' }, { c: '109,444 110,458' },
  { d: '132,375 134,392' }, { d: '204,373 206,347' }, { d: '224,332 228,362 232,340' }, { d: '246,347 248,337' },
  { d: '264,322 276,322' }, { d: '282,330 294,330' }, { e: '1124,427 1128,427' }
];

function points(data) {
  const out = [];
  let last = 0;
  for (const key in data) {
    const [ox, oy, step] = bands[key];
    for (const pair of data[key].split(' ')) {
      const [px, py] = pair.split(',').map(Number);
      const x = ox + px / step;
      if (x <= last) continue;
      last = x;
      out.push([x, oy + py / 3]);
    }
  }
  return out;
}

function path(pts, straight) {
  const r = n => n.toFixed(1);
  let d = `M${r(pts[0][0])} ${r(pts[0][1])}`;
  for (let i = 1; i < pts.length; i++) {
    const p = pts[i], q = pts[i - 1];
    if (straight) {
      d += `L${r(p[0])} ${r(p[1])}`;
      continue;
    }
    const before = pts[i - 2] || q, after = pts[i + 1] || p;
    const dx = (p[0] - q[0]) / 3;
    const slope = (a, b, c) => (b[1] - a[1]) * (c[1] - b[1]) <= 0 ? 0 : (c[1] - a[1]) / (c[0] - a[0]);
    const m0 = slope(before, q, p), m1 = slope(q, p, after);
    d += `C${r(q[0] + dx)} ${r(q[1] + m0 * dx)} ${r(p[0] - dx)} ${r(p[1] - m1 * dx)} ${r(p[0])} ${r(p[1])}`;
  }
  return d;
}

for (const t of traces) {
  add('path', { class: 'trace', stroke: t.color, d: path(points(t.data), t.straight) });
}
const runs = second.map(run => path(points(run))).join('');
add('path', { class: 'halo', d: runs });
add('path', { class: 'core', d: runs });
for (const p of peaks) add('path', { class: 'peak', d: path(points(p)) });

add('text', { x: 1056, y: 927, class: 'caption' }, plot, '2nd Harmonic');

// Cursor
line(213, 270.5, RIGHT, 270.5, '#000');
line(1608.5, TOP, 1608.5, 946, '#000');
const cursor = add('g', { class: 'cursor' });
add('rect', { x: 184.5, y: 262.5, width: 29, height: 16 }, cursor);
add('text', { x: 199, y: 276 }, cursor, '87,6');
add('rect', { x: 1590.5, y: 946.5, width: 34, height: 16 }, cursor);
add('text', { x: 1608, y: 960 }, cursor, '5,41k');
```
